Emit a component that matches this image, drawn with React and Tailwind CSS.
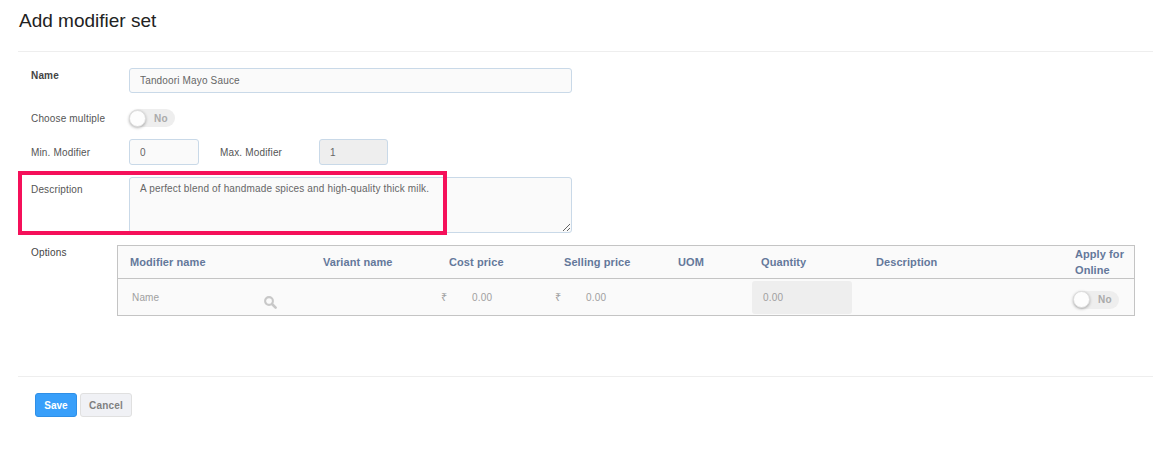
import React from "react";

const font = { fontFamily: '"Liberation Sans", Arial, sans-serif' };

function Toggle() {
  return (
    <div className="flex h-[18px] w-[46px] items-center rounded-full bg-[#eeeeee] text-[10px] font-bold text-[#aaaaaa]">
      <span className="h-[17px] w-[17px] rounded-full border border-[#dddddd] bg-[#fdfdfd] shadow-[0_1px_3px_rgba(0,0,0,0.3)]" />
      <span className="ml-[8px]">No</span>
    </div>
  );
}

const fieldClass =
  "rounded-[3px] border border-[#c9d9e8] bg-[#fafafa] text-[10px] text-[#666666] tracking-[0.16px] outline-none";

const headers = [
  ["w-[193px]", "Modifier name"],
  ["w-[126px]", "Variant name"],
  ["w-[115px]", "Cost price"],
  ["w-[114px]", "Selling price"],
  ["w-[83px]", "UOM"],
  ["w-[115px]", "Quantity"],
  ["w-[199px]", "Description"],
  ["w-[59px] leading-[16px]", "Apply for Online"],
];

function SearchIcon() {
  return (
    <svg className="mt-[11px] w-[13px]" width="13" height="13" viewBox="0 0 13 13" fill="none" stroke="#c8c8c8">
      <circle cx="5" cy="5" r="3.9" strokeWidth="2.1" />
      <path d="M8 8L11.6 11.6" strokeWidth="2.6" strokeLinecap="round" />
    </svg>
  );
}

export default function App() {
  return (
    <div className="relative h-[470px] w-[1153px] overflow-hidden bg-white" style={font}>
      <h1 className="h-[51px] pl-[19px] pt-[10px] text-[19px] font-normal leading-[22px] text-[#222222]">
        Add modifier set
      </h1>
      <div className="ml-[18px] h-px bg-[#eeeeee]" />

      <div className="pl-[31px] pt-[16px] text-[10px] tracking-[0.16px] text-[#555555]">
        <div className="flex h-[25px]">
          <div className="w-[98px] pt-[2px] font-bold leading-[12px] text-[#444444]">Name</div>
          <input
            readOnly
            value="Tandoori Mayo Sauce"
            className={`h-[25px] w-[443px] pl-[10px] ${fieldClass}`}
          />
        </div>

        <div className="mt-[16px] flex h-[18px] items-center">
          <div className="w-[98px] pt-[1px]">Choose multiple</div>
          <Toggle />
        </div>

        <div className="mt-[12px] flex h-[26px] items-center">
          <div className="w-[98px]">Min. Modifier</div>
          <input readOnly value="0" className={`h-[26px] w-[70px] pl-[10px] ${fieldClass}`} />
          <div className="ml-[21px] w-[99px]">Max. Modifier</div>
          <input
            readOnly
            value="1"
            className="h-[26px] w-[69px] rounded-[3px] border border-[#c9d9e8] bg-[#eeeeee] pl-[10px] text-[10px] text-[#666666] outline-none"
          />
        </div>

        <div className="mt-[12px] flex h-[56px]">
          <div className="w-[98px] pt-[7px] leading-[12px]">Description</div>
          <textarea
            readOnly
            defaultValue="A perfect blend of handmade spices and high-quality thick milk."
            className={`h-[56px] w-[443px] pl-[10px] pt-[5px] leading-[12px] ${fieldClass}`}
          />
        </div>

        <div className="mt-[12px] flex">
          <div className="w-[86px] pt-[2px] leading-[12px] text-[#444444]">Options</div>
          <div className="h-[71px] w-[1018px] border border-[#c4c4c4] bg-[#fafafa]">
            <div className="flex h-[33px] items-center border-b border-[#c4c4c4] pl-[12px] text-[11px] font-bold tracking-[0.08px] text-[#64789a]">
              {headers.map(([w, label]) => (
                <span key={label} className={w}>
                  {label}
                </span>
              ))}
            </div>
            <div className="flex h-[36px] items-center pl-[14px] text-[#a0a0a0]">
              <span className="w-[132px] pt-[1px]">Name</span>
              <SearchIcon />
              <span className="ml-[164px] w-[31px] pt-[1px] text-[11px]">₹</span>
              <span className="w-[83px] pt-[1px]">0.00</span>
              <span className="w-[31px] pt-[1px] text-[11px]">₹</span>
              <span className="w-[166px] pt-[1px]">0.00</span>
              <div className="flex h-[33px] w-[100px] items-center rounded-[3px] bg-[#eeeeee] pl-[11px]">0.00</div>
              <div className="ml-[221px] mt-[5px]">
                <Toggle />
              </div>
            </div>
          </div>
        </div>
      </div>

      <div className="ml-[18px] mt-[60px] h-px bg-[#eeeeee]" />

      <div className="flex gap-[3px] pl-[35px] pt-[16px]">
        <button className="h-[24px] w-[42px] rounded-[3px] border border-[#2f8fe6] bg-[#389ffa] text-[10px] font-bold text-white">Save</button>
        <button className="h-[24px] w-[52px] rounded-[3px] border border-[#e0e0e0] bg-[#f0f1f5] text-[10px] font-bold tracking-[0.16px] text-[#808080]">Cancel</button>
      </div>

      <div className="pointer-events-none absolute left-[18px] top-[171px] h-[64px] w-[429px] border-[4px] border-[#f5105a]" />
    </div>
  );
}
